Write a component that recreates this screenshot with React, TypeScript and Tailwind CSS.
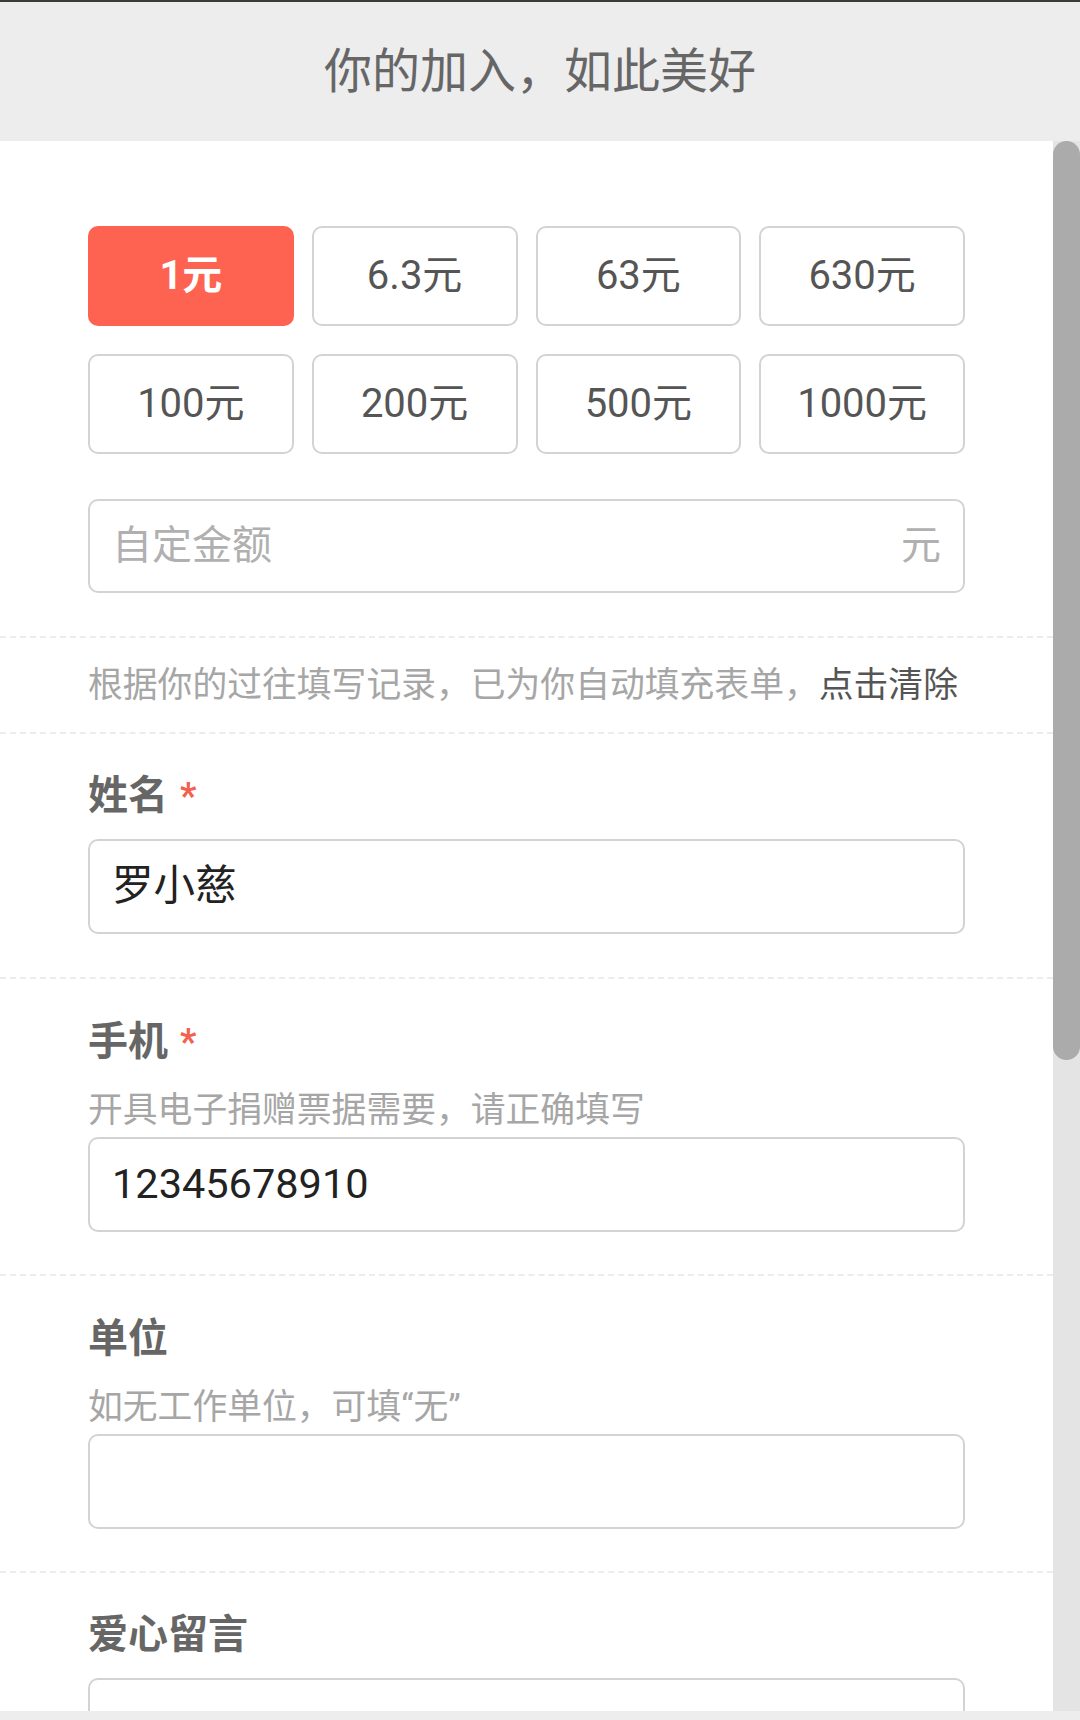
import React from 'react';

const amounts = ['1元', '6.3元', '63元', '630元', '100元', '200元', '500元', '1000元'];

const font = "font-['Roboto','Noto_Sans_CJK_SC',sans-serif]";

const Field: React.FC<{ label: string; required?: boolean; hint?: string; value?: string }> = ({ label, required, hint, value }) => (
    <section
        className={
            hint
                ? 'border-t-2 border-dashed border-[#ececec] px-[88px] pt-[39px] pb-[42px]'
                : 'border-t-2 border-dashed border-[#ececec] px-[88px] pt-[38px] pb-[43px]'
        }
    >
        <div
            className={
                hint
                    ? 'flex items-center h-[48px] mb-[22px] text-[40px] font-bold text-[#666] leading-[48px]'
                    : 'flex items-center h-[48px] mb-[19px] text-[40px] font-bold text-[#666] leading-[48px]'
            }
        >
            {label}
            {required && <span className="ml-[12px] text-[#f4604e] text-[36px]">*</span>}
        </div>
        {hint && <div className="h-[44px] leading-[44px] text-[34.8px] text-[#a6a6a6] mb-[5px]">{hint}</div>}
        <div className="h-[95px] border-2 border-[#d3d3d3] rounded-[10px] flex items-center px-[22px] text-[41.5px] text-[#222]">
            {value}
        </div>
    </section>
);

export default function App() {
    return (
        <div className={`w-[1080px] h-[1720px] flex flex-col bg-[#ededed] overflow-hidden ${font}`}>
            <div className="h-[2px] bg-[#3a3c36]" />
            <header className="h-[139px] flex items-center justify-center text-[48px] text-[#666]">
                你的加入，如此美好
            </header>
            <div className="flex h-[1570px]">
                <main className="flex-1 bg-white overflow-hidden">
                    {/* amount picker */}
                    <section className="px-[88px] pt-[85px] pb-[43px]">
                        <div className="grid grid-cols-4 gap-x-[18px] gap-y-[28px]">
                            {amounts.map((a, i) => (
                                <div
                                    key={a}
                                    className={
                                        i === 0
                                            ? 'h-[100px] rounded-[10px] bg-[#fe6351] flex items-center justify-center text-[40px] font-bold text-white'
                                            : 'h-[100px] rounded-[10px] border-2 border-[#d3d3d3] flex items-center justify-center text-[40px] text-[#555]'
                                    }
                                >
                                    {a}
                                </div>
                            ))}
                        </div>
                        <div className="mt-[45px] h-[94px] border-2 border-[#d3d3d3] rounded-[10px] flex items-center justify-between px-[22px] text-[40px] text-[#b0b0b0]">
                            <span>自定金额</span>
                            <span>元</span>
                        </div>
                    </section>

                    <section className="border-t-2 border-dashed border-[#ececec] px-[88px] h-[96px] flex items-center text-[34.8px] text-[#a6a6a6]">
                        根据你的过往填写记录，已为你自动填充表单，<span className="text-[#555]">点击清除</span>
                    </section>

                    <Field label="姓名" required value="罗小慈" />
                    <Field label="手机" required hint="开具电子捐赠票据需要，请正确填写" value="12345678910" />
                    <Field label="单位" hint="如无工作单位，可填“无”" />
                    <Field label="爱心留言" />
                </main>
                {/* scrollbar */}
                <div className="w-[27px] bg-[#e4e4e4]">
                    <div className="h-[919px] rounded-full bg-[#ababab]" />
                </div>
            </div>
        </div>
    );
}
